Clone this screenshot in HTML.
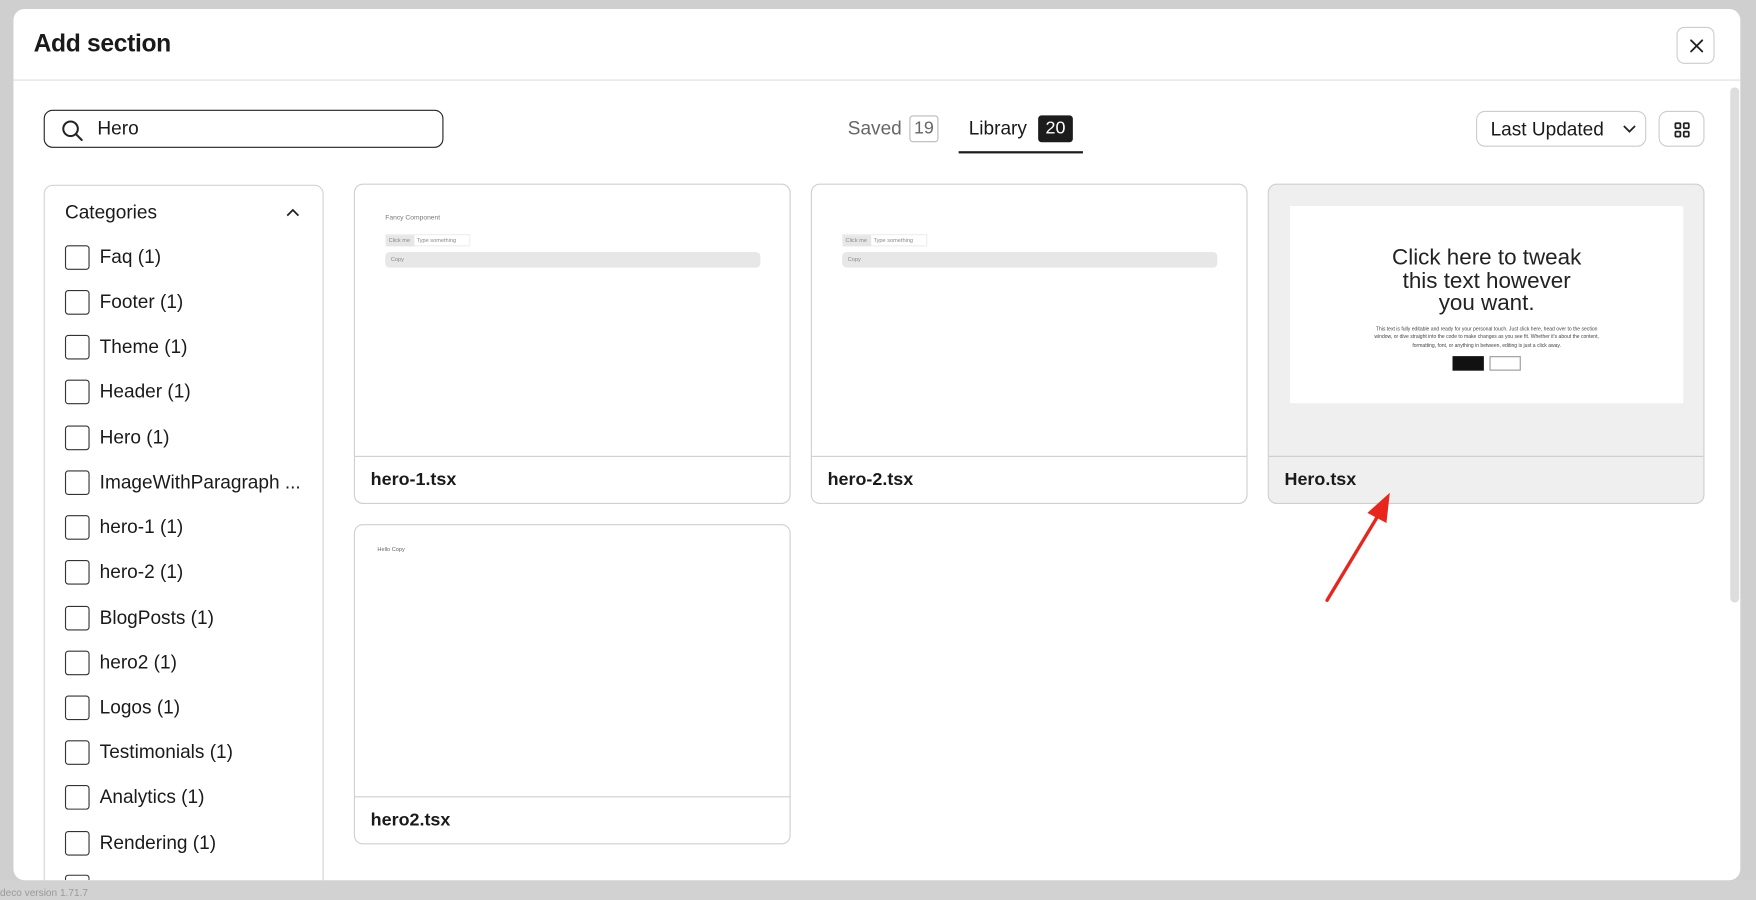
<!DOCTYPE html>
<html><head><meta charset="utf-8"><style>
*{box-sizing:border-box;margin:0;padding:0}
html,body{width:1756px;height:900px;overflow:hidden;background:#cfcfcf;font-family:"Liberation Sans",sans-serif;color:#1a1a1a}
#s{position:absolute;left:0;top:0;width:1568px;height:804px;transform:scale(1.119898);transform-origin:0 0}
.a{position:absolute}
.modal{left:12px;top:8px;width:1542px;height:778px;background:#fff;border-radius:10px;overflow:hidden}
.cb{position:absolute;left:58px;width:22px;height:22px;border:1.3px solid #333;border-radius:3px}
.lb{position:absolute;left:89px;font-size:17px;line-height:20px}
.card{position:absolute;border:1px solid #cfcfcf;border-radius:8px;background:#fff;overflow:hidden}
.card .ft{position:absolute;left:0;right:0;bottom:0;height:42px;border-top:1px solid #cfcfcf;padding-left:14px;font-weight:bold;font-size:16px;line-height:41px}
.tiny{font-size:5px;color:#888}
</style></head><body><div id="s">
<div class="a" style="left:0;top:786px;width:1568px;height:18px;background:#d2d2d2"></div>
<div class="a" style="left:0;top:792px;font-size:9px;color:#999">deco version 1.71.7</div>
<div class="a modal">
<div class="a" style="left:18px;top:18px;font-size:22px;font-weight:bold;letter-spacing:-0.3px">Add section</div>
<div class="a" style="left:0;top:63px;width:1542px;height:1px;background:#ddd"></div>
<div class="a" style="left:1485px;top:16px;width:34px;height:33px;border:1px solid #ccc;border-radius:7px"><svg width="34" height="33" viewBox="0 0 34 33"><path d="M12 11l10 10M22 11l-10 10" stroke="#222" stroke-width="1.6" stroke-linecap="round"/></svg></div>
<div class="a" style="left:27px;top:90px;width:357px;height:34px;border:1.5px solid #222;border-radius:8px">
<svg class="a" style="left:14px;top:7px" width="22" height="22" viewBox="0 0 22 22"><circle cx="9" cy="9" r="6.5" stroke="#222" stroke-width="1.8" fill="none"/><path d="M14 14l5 5" stroke="#222" stroke-width="1.8" stroke-linecap="round"/></svg>
<div class="a" style="left:47px;top:6px;font-size:17px">Hero</div></div>
<div class="a" style="left:745px;top:97px;font-size:17px;color:#666">Saved</div>
<div class="a" style="left:800px;top:95px;width:26px;height:24px;border:1px solid #bbb;border-radius:3px;font-size:16px;color:#666;text-align:center;line-height:22px">19</div>
<div class="a" style="left:853px;top:97px;font-size:17px">Library</div>
<div class="a" style="left:915px;top:95px;width:31px;height:24px;background:#1c1c1c;border-radius:3px;font-size:16px;color:#fff;text-align:center;line-height:24px">20</div>
<div class="a" style="left:844px;top:127px;width:111px;height:2px;background:#1c1c1c"></div>
<div class="a" style="left:1306px;top:91px;width:152px;height:32px;border:1px solid #ccc;border-radius:8px;font-size:17px;line-height:31px;padding-left:12px">Last Updated
<svg class="a" style="left:130px;top:11px" width="12" height="8" viewBox="0 0 12 8"><path d="M1 1.5l5 5 5-5" stroke="#222" stroke-width="1.6" fill="none"/></svg></div>
<div class="a" style="left:1469px;top:91px;width:41px;height:32px;border:1px solid #ccc;border-radius:8px"><svg class="a" style="left:13px;top:9px" width="14" height="14" viewBox="0 0 14 14" fill="none" stroke="#222" stroke-width="1.6"><rect x="1" y="1" width="4.5" height="4.5" rx="1"/><rect x="8.5" y="1" width="4.5" height="4.5" rx="1"/><rect x="1" y="8.5" width="4.5" height="4.5" rx="1"/><rect x="8.5" y="8.5" width="4.5" height="4.5" rx="1"/></svg></div>
<div class="a" style="left:27px;top:157px;width:250px;height:640px;border:1px solid #d4d4d4;border-radius:8px"></div>
<div class="a" style="left:1533px;top:70px;width:8px;height:460px;background:#ddd;border-radius:4px"></div>
</div>
<div class="a" style="left:58px;top:180px;font-size:17px">Categories</div>
<svg class="a" style="left:255px;top:185px" width="13" height="9" viewBox="0 0 13 9"><path d="M1.5 7.5l5-5 5 5" stroke="#222" stroke-width="1.6" fill="none"/></svg>
<div class="cb" style="top:219px"></div><div class="lb" style="top:220px">Faq (1)</div>
<div class="cb" style="top:259px"></div><div class="lb" style="top:260px">Footer (1)</div>
<div class="cb" style="top:299px"></div><div class="lb" style="top:300px">Theme (1)</div>
<div class="cb" style="top:339px"></div><div class="lb" style="top:340px">Header (1)</div>
<div class="cb" style="top:380px"></div><div class="lb" style="top:381px">Hero (1)</div>
<div class="cb" style="top:420px"></div><div class="lb" style="top:421px">ImageWithParagraph ...</div>
<div class="cb" style="top:460px"></div><div class="lb" style="top:461px">hero-1 (1)</div>
<div class="cb" style="top:500px"></div><div class="lb" style="top:501px">hero-2 (1)</div>
<div class="cb" style="top:541px"></div><div class="lb" style="top:542px">BlogPosts (1)</div>
<div class="cb" style="top:581px"></div><div class="lb" style="top:582px">hero2 (1)</div>
<div class="cb" style="top:621px"></div><div class="lb" style="top:622px">Logos (1)</div>
<div class="cb" style="top:661px"></div><div class="lb" style="top:662px">Testimonials (1)</div>
<div class="cb" style="top:701px"></div><div class="lb" style="top:702px">Analytics (1)</div>
<div class="cb" style="top:742px"></div><div class="lb" style="top:743px">Rendering (1)</div>
<div class="cb" style="top:781px;height:5px;border-bottom:none;border-radius:3px 3px 0 0"></div>

<div class="card" style="left:316px;top:164px;width:390px;height:286px">
<div class="a" style="left:27px;top:27px;font-size:6px;color:#777">Fancy Component</div>
<div class="a" style="left:27px;top:44px;width:76px;height:11px;border:1px solid #eee"><div style="width:25px;height:10px;background:#e6e6e6"></div></div>
<div class="a tiny" style="left:30px;top:47px">Click me</div><div class="a tiny" style="left:55px;top:47px">Type something</div>
<div class="a" style="left:27px;top:60px;width:335px;height:14px;background:#e7e7e7;border-radius:4px"></div>
<div class="a tiny" style="left:32px;top:64px">Copy</div>
<div class="ft">hero-1.tsx</div></div>
<div class="card" style="left:724px;top:164px;width:390px;height:286px">
<div class="a" style="left:27px;top:44px;width:76px;height:11px;border:1px solid #eee"><div style="width:25px;height:10px;background:#e6e6e6"></div></div>
<div class="a tiny" style="left:30px;top:47px">Click me</div><div class="a tiny" style="left:55px;top:47px">Type something</div>
<div class="a" style="left:27px;top:60px;width:335px;height:14px;background:#e7e7e7;border-radius:4px"></div>
<div class="a tiny" style="left:32px;top:64px">Copy</div>
<div class="ft">hero-2.tsx</div></div>
<div class="card" style="left:1132px;top:164px;width:390px;height:286px;background:#efefef">
<div class="a" style="left:19px;top:19px;width:351px;height:176px;background:#fff;text-align:center">
<div style="margin-top:36px;font-size:20px;line-height:20.5px;color:#222">Click here to tweak<br>this text however<br>you want.</div>
<div style="margin:8px auto 0;width:205px;font-size:4.5px;line-height:7.5px;color:#444">This text is fully editable and ready for your personal touch. Just click here, head over to the section window, or dive straight into the code to make changes as you see fit. Whether it's about the content, formatting, font, or anything in between, editing is just a click away.</div>
<div style="margin-top:6px"><span style="display:inline-block;width:28px;height:13px;background:#111;vertical-align:top"></span> <span style="display:inline-block;width:28px;height:13px;border:1px solid #999;vertical-align:top"></span></div>
</div>
<div class="ft" style="border-top-color:#ccc">Hero.tsx</div></div>
<div class="card" style="left:316px;top:468px;width:390px;height:286px">
<div class="a tiny" style="left:20px;top:19px;color:#666">Hello Copy</div>
<div class="ft">hero2.tsx</div></div>
<svg class="a" style="left:1170px;top:430px" width="90" height="115" viewBox="0 0 90 115"><path d="M15 106L62 28" stroke="#e8261b" stroke-width="3" stroke-linecap="round"/><path d="M71 10L51 28L68 37Z" fill="#e8261b"/></svg>
</div></body></html>
